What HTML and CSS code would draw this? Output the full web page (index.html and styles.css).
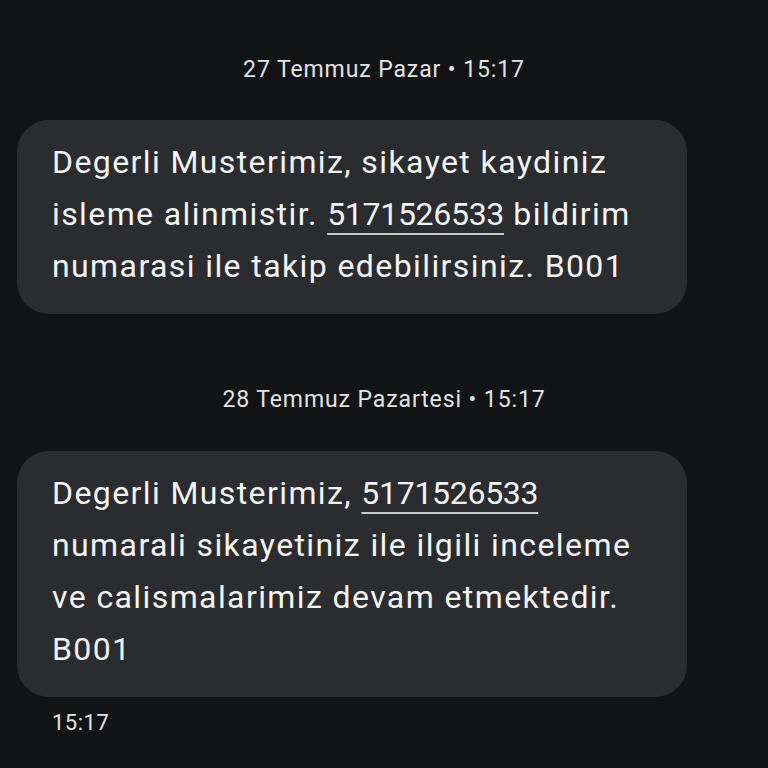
FILE: index.html
```html
<!DOCTYPE html>
<html lang="tr">
<head>
    <meta charset="UTF-8">
    <meta name="viewport" content="width=device-width, initial-scale=1.0">
    <title>Mesajlar</title>
    <link rel="stylesheet" href="styles.css">
</head>
<body>
    <div class="thread">
        <!-- Ilk mesaj -->
        <div class="day-label">27 Temmuz Pazar • 15:17</div>
        <div class="bubble">
            Degerli Musterimiz, sikayet kaydiniz isleme alinmistir. <span class="num">5171526533</span> bildirim numarasi ile takip edebilirsiniz. B001
        </div>

        <!-- Ikinci mesaj -->
        <div class="day-label second">28 Temmuz Pazartesi • 15:17</div>
        <div class="bubble">
            Degerli Musterimiz, <span class="num">5171526533</span> numarali sikayetiniz ile ilgili inceleme ve calismalarimiz devam etmektedir. B001
        </div>
        <div class="time">15:17</div>
    </div>
</body>
</html>
```

FILE: styles.css
```css
body {
    margin: 0;
    background-color: #111315;
    font-family: 'Roboto', 'Noto Sans', sans-serif;
    color: #f1f1f1;
    height: 768px;
    overflow: hidden;
}

.thread {
    display: flex;
    flex-direction: column;
    padding: 56px 81px 0 17px;
}

.day-label {
    text-align: center;
    font-size: 23px;
    line-height: 28px;
    letter-spacing: 0.9px;
    color: #e3e3e3;
    padding-left: 64px;
    margin-bottom: 36px;
}

.day-label.second {
    margin-top: 72px;
    margin-bottom: 37px;
}

.bubble {
    background-color: #2a2c30;
    border-radius: 32px;
    padding: 16px 30px 22px 35px;
    font-size: 32px;
    line-height: 52px;
    letter-spacing: 1.4px;
    color: #f4f4f4;
}

.bubble + .time {
    margin-top: 12px;
}

.num {
    letter-spacing: -0.3px;
    text-decoration: underline;
    text-decoration-thickness: 2px;
    text-underline-offset: 8px;
    text-decoration-color: #c9c9c9;
}

.time {
    font-size: 22px;
    line-height: 28px;
    letter-spacing: 0.5px;
    color: #e3e3e3;
    padding-left: 35px;
}
```
